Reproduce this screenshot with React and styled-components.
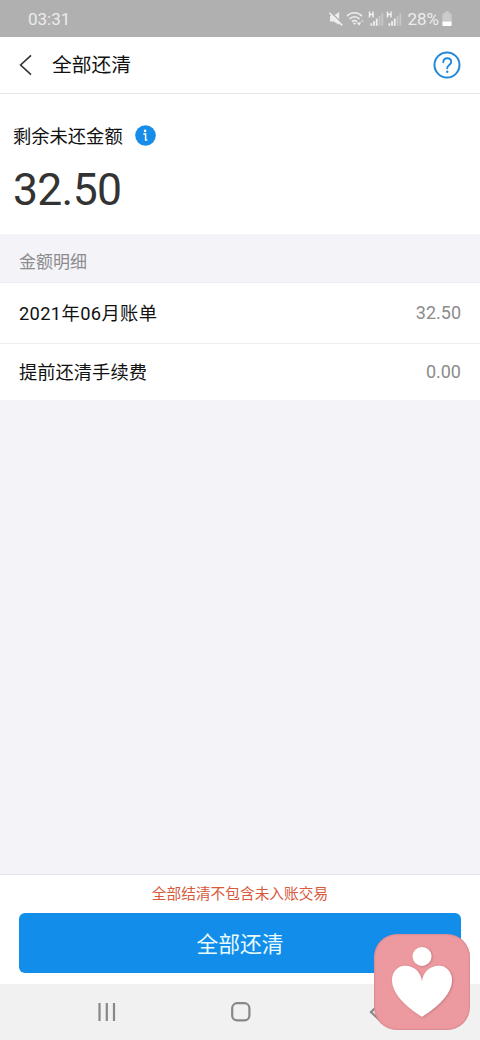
import React from "react";
import styled, { createGlobalStyle } from "styled-components";

const bills = [
  { label: "2021年06月账单", amount: "32.50", tracking: "0.35px" },
  { label: "提前还清手续费", amount: "0.00", tracking: "0" },
];

const MuteIcon = () => (
  <svg width="16" height="16" viewBox="0 0 16 16">
    <path d="M2 4.8h3.5L11.2 1v12.8L5.5 10.5H2z" fill="#ececec" />
    <path d="M2.5 1l13 12.6" stroke="#b0b0b0" strokeWidth="1.6" />
    <path d="M1.4 1.8l12.8 12.6" stroke="#f0f0f0" strokeWidth="1.5" />
  </svg>
);

const WifiIcon = () => (
  <svg width="20" height="16" viewBox="0 0 20 16">
    <g fill="none" stroke="#ededed" strokeWidth="1.6">
      <path d="M1 5.2C5.2.6 11.8.6 16 5.2" />
      <path d="M3.5 8c2.9-3.1 7.1-3.1 10 0" />
      <path d="M6 10.6c1.5-1.5 3.5-1.5 5 0" />
    </g>
    <path d="M6.7 11.8h3.6L8.5 14z" fill="#ededed" />
    <path d="M10.8 11.5h4.4L13 14.8z" fill="#f0f0f0" />
    <path d="M14.6 11h3.6l-1.8-2.6z" fill="#cecece" />
  </svg>
);

const SignalIcon = () => (
  <svg width="16" height="16" viewBox="0 0 16 16">
    <path d="M1.5.5v6M5 .5v6M1.5 3.5H5" stroke="#f4f4f4" strokeWidth="1.4" />
    <path d="M3.3 12.2v2.5M6 10.3v4.4M8.7 7.5v7.2" stroke="#f0f0f0" strokeWidth="1.8" />
    <path d="M11.5 5v9.7M14.3 2.3v12.4" stroke="#c8c8c8" strokeWidth="1.8" />
  </svg>
);

const BatteryIcon = () => (
  <svg width="10" height="16" viewBox="0 0 10 16">
    <path d="M3 .6h4v1.7h1.6q1 0 1 1v7.2H.4V3.3q0-1 1-1H3z" fill="#cbcbcb" />
    <path d="M.4 10.5h9.2V14q0 1-1 1H1.4q-1 0-1-1z" fill="#fff" />
  </svg>
);

const BackIcon = () => (
  <svg width="14" height="22" viewBox="0 0 14 22">
    <path d="M12 1.3L1.6 11 12 20.7" fill="none" stroke="#333" strokeWidth="1.6" />
  </svg>
);

const HelpIcon = () => (
  <svg width="28" height="28" viewBox="0 0 28 28">
    <g fill="none" stroke="#2488d8">
      <circle cx="14" cy="14" r="12.5" strokeWidth="2" />
      <path
        d="M10.3 11.2c0-2.6 1.6-4 3.9-4s4 1.5 4 3.7c0 3.1-4 3.1-4 6.4"
        strokeWidth="1.9"
        strokeLinecap="round"
      />
    </g>
    <circle cx="14.2" cy="20.7" r="1.2" fill="#2488d8" />
  </svg>
);

const InfoIcon = () => (
  <svg width="21" height="21" viewBox="0 0 21 21">
    <circle cx="10.5" cy="10.5" r="10.3" fill="#168ee9" />
    <circle cx="10.1" cy="5.9" r="1.3" fill="#fff" />
    <path d="M8.3 9h2.3v5.9h1.7" fill="none" stroke="#fff" strokeWidth="1.5" />
  </svg>
);

const HeartPerson = () => (
  <svg width="96" height="96" viewBox="0 0 96 96">
    <defs>
      <filter id="soft" x="-20%" y="-20%" width="140%" height="140%">
        <feDropShadow dx="0.8" dy="0.6" stdDeviation="0.9" floodColor="#8d4b50" floodOpacity="0.5" />
      </filter>
    </defs>
    <g fill="#fff" filter="url(#soft)">
      <circle cx="48" cy="22.4" r="9.5" />
      <path d="M48 82.7C38 76.5 18 62.5 18 46c0-8 5.5-14.3 13.2-14.3C40 31.7 47 38 48 47.5 49 38 56 31.7 64.8 31.7 72.5 31.7 78 38 78 46c0 16.5-20 30.5-30 36.7z" />
    </g>
  </svg>
);

export default function App() {
  return (
    <Screen>
      <GlobalStyle />
      <StatusBar>
        <span>03:31</span>
        <StatusIcons>
          <MuteIcon />
          <WifiIcon />
          <SignalIcon />
          <SignalIcon />
          <Percent>28%</Percent>
          <BatteryIcon />
        </StatusIcons>
      </StatusBar>

      <Header>
        <BackIcon />
        <Title>全部还清</Title>
        <HelpIcon />
      </Header>

      <Summary>
        <SummaryLabel>
          剩余未还金额
          <InfoIcon />
        </SummaryLabel>
        <Total>32.50</Total>
      </Summary>

      <SectionTitle>金额明细</SectionTitle>
      {bills.map(({ label, amount, tracking }) => (
        <Row key={label}>
          <Label $tracking={tracking}>{label}</Label>
          <Amount>{amount}</Amount>
        </Row>
      ))}

      <Footer>
        <Notice>全部结清不包含未入账交易</Notice>
        <PayButton>全部还清</PayButton>
      </Footer>

      <NavBar>
        <svg width="18" height="18" viewBox="0 0 18 18">
          <path d="M1.5 0v18M8.8 0v18M16 0v18" stroke="#888" strokeWidth="2.2" />
        </svg>
        <HomeIcon width="20" height="20" viewBox="0 0 20 20">
          <rect x="1.2" y="1.2" width="17.2" height="17.2" rx="5" fill="none" stroke="#888" strokeWidth="2.2" />
        </HomeIcon>
        <svg width="12" height="20" viewBox="0 0 12 20">
          <path d="M11 1.5L2 10l9 8.5" fill="none" stroke="#888" strokeWidth="2.2" />
        </svg>
      </NavBar>

      <FloatingBadge>
        <HeartPerson />
      </FloatingBadge>
    </Screen>
  );
}

const GlobalStyle = createGlobalStyle`
  body {
    margin: 0;
  }

  * {
    box-sizing: border-box;
  }

  svg {
    display: block;
    flex: none;
  }
`;

const Screen = styled.div`
  position: relative;
  display: flex;
  flex-direction: column;
  width: 480px;
  height: 1040px;
  overflow: hidden;
  background: #f4f3f8;
  color: #111;
  font-family: Roboto, "Noto Sans CJK SC", sans-serif;
`;

const StatusBar = styled.div`
  display: flex;
  align-items: center;
  justify-content: space-between;
  height: 37px;
  padding: 0 28px;
  background: #b0b0b0;
  color: #ececec;
  font-size: 17px;
`;

const StatusIcons = styled.div`
  display: flex;
  align-items: center;
  gap: 2px;
`;

const Percent = styled.span`
  margin: 0 1px 0 3px;
`;

const Header = styled.div`
  display: flex;
  align-items: center;
  height: 57px;
  padding: 0 19px 1px;
  background: #fff;
  border-bottom: 1px solid #e6e6e6;
`;

const Title = styled.div`
  flex: 1;
  margin-left: 19px;
  padding-top: 2px;
  font-size: 19.8px;
  line-height: 28px;
`;

const Summary = styled.div`
  height: 140px;
  padding: 27px 13px 0;
  background: #fff;
`;

const SummaryLabel = styled.div`
  display: flex;
  align-items: center;
  gap: 12px;
  height: 28px;
  font-size: 18.3px;
`;

const Total = styled.div`
  margin-top: 15px;
  color: #333;
  font-size: 44.5px;
  letter-spacing: -0.7px;
  line-height: 52px;
`;

const SectionTitle = styled.div`
  height: 49px;
  padding-left: 19px;
  border-bottom: 1px solid #ececf0;
  color: #8c8c8e;
  font-size: 17px;
  line-height: 56px;
`;

const Row = styled.div`
  display: flex;
  align-items: center;
  justify-content: space-between;
  height: 57px;
  padding: 0 19px 2px;
  background: #fff;
  font-size: 18.3px;

  & + & {
    border-top: 1px solid #eee;
  }

  ${SectionTitle} + & {
    height: 60px;
  }
`;

const Label = styled.span`
  letter-spacing: ${({ $tracking }) => $tracking};
`;

const Amount = styled.span`
  color: #8c8c8c;
  font-size: 18px;
`;

const Footer = styled.div`
  display: flex;
  flex-direction: column;
  align-items: center;
  height: 110px;
  margin-top: auto;
  padding: 8px 19px 0;
  background: #fff;
  border-top: 1px solid #e6e6e8;
`;

const Notice = styled.div`
  height: 30px;
  color: #d85a3c;
  font-size: 14.7px;
  line-height: 22px;
`;

const PayButton = styled.button`
  width: 100%;
  height: 60px;
  padding: 0 0 2px;
  border: 0;
  border-radius: 6px;
  background: #128eea;
  color: #e8fbff;
  font-family: inherit;
  font-size: 21.8px;
`;

const NavBar = styled.div`
  display: flex;
  align-items: center;
  justify-content: space-between;
  height: 56px;
  padding: 0 99px 0 98px;
  background: #f1f1f1;
`;

const HomeIcon = styled.svg`
  margin: 0 2px 0 -2px;
`;

const FloatingBadge = styled.div`
  position: absolute;
  right: 10px;
  bottom: 10px;
  width: 96px;
  height: 96px;
  border-radius: 23px;
  background: #ec9a9f;
  box-shadow: inset 0 0 2px rgba(130, 70, 75, 0.5);
`;
